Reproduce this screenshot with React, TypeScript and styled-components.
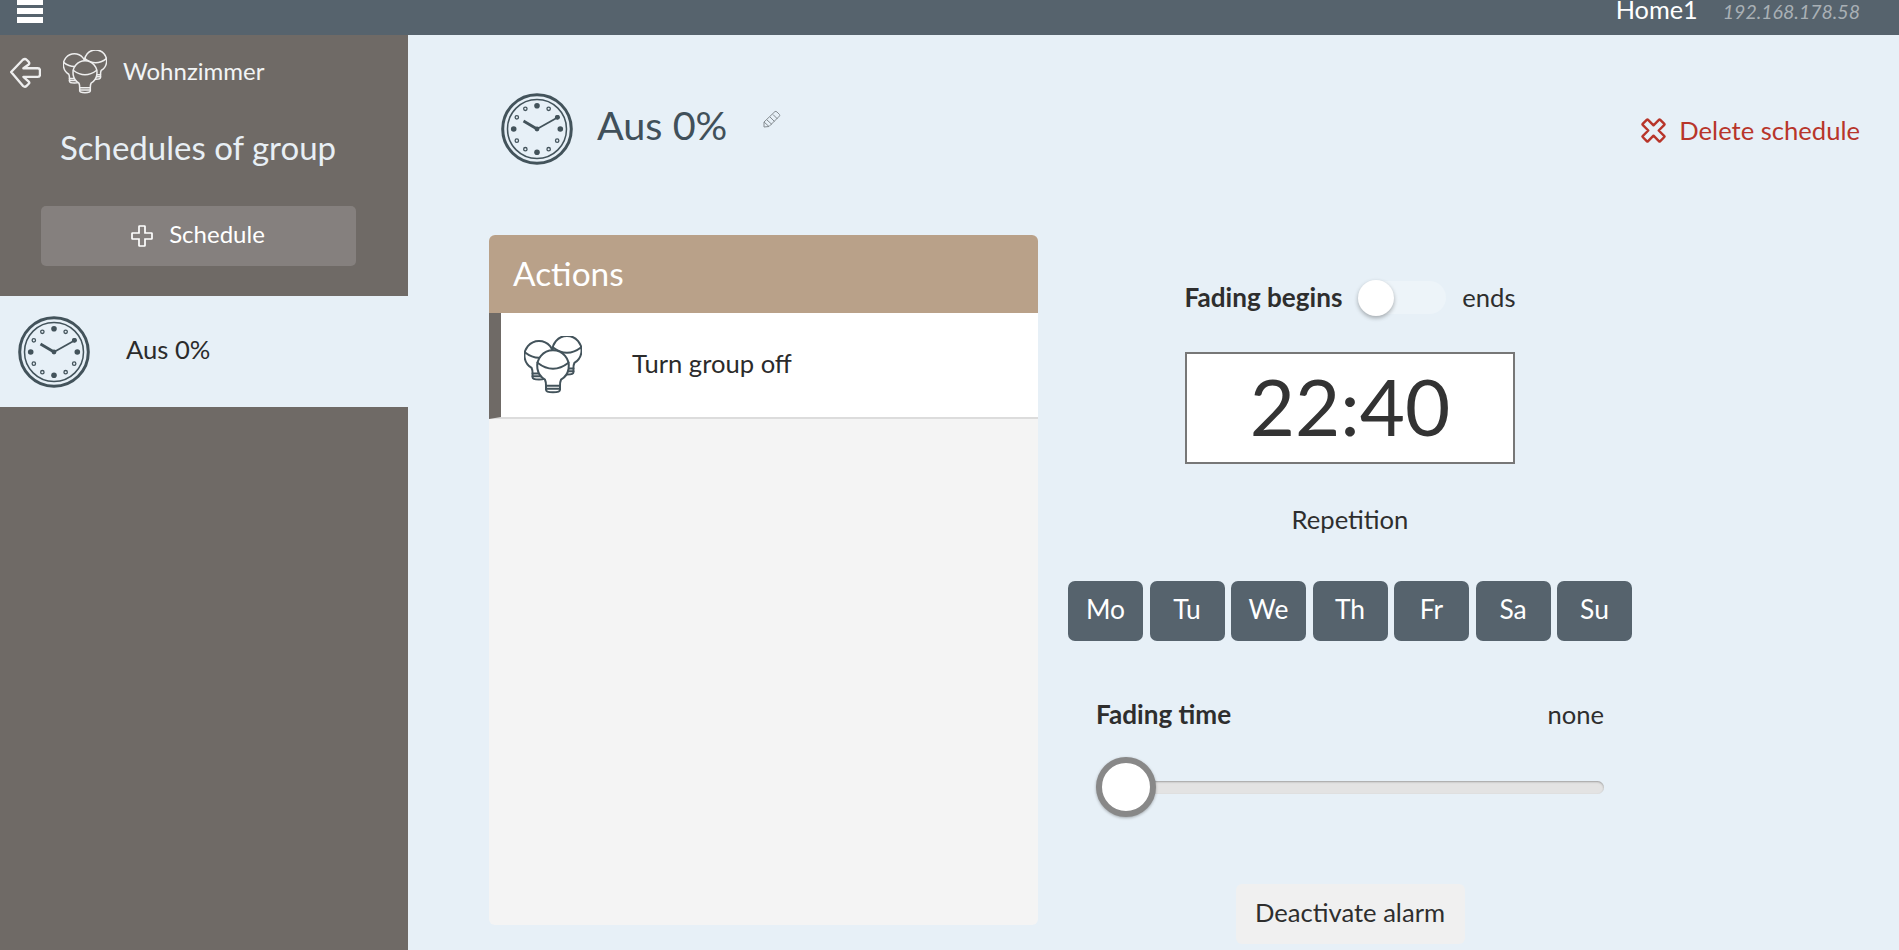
import React from "react";
import styled, { createGlobalStyle } from "styled-components";

const Global = createGlobalStyle`
  html, body { margin: 0; padding: 0; height: 100%; overflow: hidden; background: #e7f0f7; }
  body { font-family: Lato, "Liberation Sans", sans-serif; color: #333; font-size: 25.6px; font-variant-ligatures: common-ligatures; }
  * { box-sizing: border-box; }
`;

const Page = styled.div`display: flex; flex-direction: column; width: 1899px; height: 950px; overflow: hidden;`;
const TopBar = styled.header`
  flex: 0 0 35px; height: 35px; background: #56636d; display: flex; align-items: flex-start;
  justify-content: space-between; padding: 0 39px 0 17px; overflow: hidden;
`;
const Burger = styled.div`
  width: 26px; display: flex; flex-direction: column; gap: 3px; margin-top: -1px;
  & > i { display: block; height: 6px; background: #fff; }
`;
const HostInfo = styled.div`display: flex; align-items: baseline; gap: 25px; margin-top: -6px;`;
const HomeName = styled.span`color: #fff; font-size: 25.3px; line-height: 30px;`;
const HostIp = styled.span`color: #a9b0b5; font-size: 19.5px; font-style: italic;`;
const Body = styled.div`flex: 1; display: flex; min-height: 0;`;

const Sidebar = styled.aside`width: 408px; background: #6f6a66; display: flex; flex-direction: column;`;
const SideTop = styled.div`height: 261px; display: flex; flex-direction: column; align-items: center; padding-right: 12px;`;
const BackRow = styled.div`
  align-self: flex-start; display: flex; align-items: center; height: 45px; margin-top: 14px; padding-left: 9px;
`;
const GroupName = styled.span`color: #f2f4f5; font-size: 24px; margin: -2px 0 0 16px;`;
const SideTitle = styled.h2`color: #e8eff5; font-size: 33px; font-weight: 400; margin: 31px 0 0; line-height: 44px;`;
const AddButton = styled.button`
  width: 315px; height: 60px; margin-top: 37px; background: #85807e; border: 0; border-radius: 5px;
  color: #fff; font: 400 24px Lato, sans-serif; display: flex; align-items: center; justify-content: center; gap: 16px; padding: 0 0 5px;
  & > svg { margin-top: 5px; }
`;
const ScheduleItem = styled.div`height: 111px; background: #e7f0f7; display: flex; align-items: center; padding-left: 18px; gap: 36px; font-size: 25.6px; color: #2b2b2b;`;
const ItemLabel = styled.span`margin-top: -6px;`;

const Main = styled.main`flex: 1; padding: 0 39px 0 81px; display: flex; flex-direction: column;`;
const Head = styled.div`height: 200px; display: flex; align-items: flex-start; justify-content: space-between;`;
const TitleWrap = styled.div`display: flex; align-items: center; height: 72px; margin-top: 58px; margin-left: 12px;`;
const Title = styled.h1`font-size: 39.6px; font-weight: 400; color: #41505a; margin: -9px 0 0 24px;`;
const EditIcon = styled.svg`margin: 0 0 20px 36px;`;
const Delete = styled.a`display: flex; align-items: center; gap: 11px; color: #b8352a; font-size: 25.6px; margin-top: 78px; line-height: 34px;`;

const Content = styled.div`display: flex;`;
const Panel = styled.section`width: 549px; height: 690px; background: #f4f4f4; border-radius: 6px; overflow: hidden;`;
const PanelHead = styled.div`height: 78px; background: #b9a189; color: #fff; font-size: 33.4px; display: flex; align-items: center; padding: 0 0 2px 24px;`;
const ActionRow = styled.div`
  height: 106px; background: #fff; border-left: 12px solid #6f6a66; border-bottom: 2px solid #dcdcdc;
  display: flex; align-items: center; padding-left: 23px; gap: 50px; color: #2b2b2b; font-size: 25.6px;
`;
const ActionLabel = styled.span`margin-top: -4px;`;

const Settings = styled.div`width: 564px; margin-left: 30px; display: flex; flex-direction: column; align-items: center;`;
const ModeRow = styled.div`display: flex; align-items: center; height: 36px; margin-top: 44px; width: 331px; justify-content: space-between;`;
const Bold = styled.span`font-weight: 700; color: #2e2e2e; font-size: 26.1px;`;
const Plain = styled.span`color: #2e2e2e; font-size: 25.6px;`;
const Switch = styled.div`
  position: relative; width: 88px; height: 33px; border-radius: 17px; background: #edf4f9; margin-right: 1px;
  &::after {
    content: ""; position: absolute; left: 0; top: -1px; width: 36px; height: 36px; border-radius: 50%;
    background: #fff; box-shadow: 0 2px 4px rgba(0,0,0,.3);
  }
`;
const TimeBox = styled.div`
  width: 330px; height: 112px; margin-top: 37px; border: 2px solid #777; background: #fff; font-size: 78px;
  color: #333; display: flex; align-items: center; justify-content: center; padding-bottom: 4px;
`;
const Repetition = styled.div`font-size: 25.6px; color: #2e2e2e; margin-top: 38px; line-height: 34px;`;
const Days = styled.div`display: flex; gap: 6.5px; margin-top: 45px;`;
const Day = styled.button`
  width: 75px; height: 60px; background: #56636d; color: #fff; border: 0; border-radius: 7px;
  font: 400 26.4px Lato, sans-serif; padding: 0 0 4px;
`;
const FadeBlock = styled.div`width: 508px; margin-top: 55px;`;
const FadeHead = styled.div`display: flex; justify-content: space-between; align-items: baseline; line-height: 36px;`;
const Slider = styled.div`position: relative; height: 60px; margin-top: 25px; display: flex; align-items: center;`;
const Track = styled.div`
  width: 100%; height: 13px; border-radius: 7px; background: #e3e3e3; box-shadow: inset 0 1px 2px rgba(0,0,0,.3);
`;
const Thumb = styled.div`
  position: absolute; left: 0; top: 0; width: 60px; height: 60px; border-radius: 50%; background: #fff;
  border: 6px solid #888; box-shadow: 0 1px 3px rgba(0,0,0,.3);
`;
const Deactivate = styled.button`
  width: 229px; height: 60px; margin-top: 67px; background: #f0f0f0; border: 0; border-radius: 6px; color: #2e2e2e;
  font: 400 25.6px Lato, sans-serif; padding: 0 0 4px;
`;

const Bulb = ({ x, y, s, bg, color }: { x: number; y: number; s: number; bg: string; color: string }) => (
  <g transform={`translate(${x} ${y}) scale(${s})`} fill={bg} stroke={color} strokeWidth={2 / s} strokeLinecap="round" strokeLinejoin="round">
    <path d="M-8 13A15.8 15.8 0 1 1 8 13C7 15 7 17 7 19V23C7 25 3 25.5 0 25.5C-3 25.5 -7 25 -7 23V19C-7 17 -7 15 -8 13Z" />
    <path d="M-15.5 -4Q0 8 15.5 -4M-7 19H7M-7 22H7" fill="none" />
  </g>
);

const Bulbs = ({ size, bg, color }: { size: number; bg: string; color: string }) => (
  <svg width={size} height={size} viewBox="0 0 58 58">
    <Bulb x={43} y={15} s={0.92} bg={bg} color={color} />
    <Bulb x={15} y={20} s={0.92} bg={bg} color={color} />
    <Bulb x={29} y={30.7} s={1} bg={bg} color={color} />
  </svg>
);

const Clock = () => {
  const c = "#43535b";
  const dots = Array.from({ length: 12 }, (_, i) => {
    const a = (i * Math.PI) / 6;
    const big = i % 3 === 0;
    return (
      <circle key={i} cx={36 + 23.3 * Math.sin(a)} cy={36 - 23.3 * Math.cos(a)} r={big ? 2.8 : 1.7}
        fill={big ? c : "none"} stroke={c} strokeWidth={big ? 0 : 1.3} />
    );
  });
  return (
    <svg width="72" height="72" viewBox="0 0 72 72" fill="none">
      <circle cx="36" cy="36" r="34.3" stroke={c} strokeWidth="3" />
      <circle cx="36" cy="36" r="29.5" stroke={c} strokeWidth="1.5" />
      {dots}
      <path d="M36 36L56.5 24.5" stroke={c} strokeWidth="1.8" />
      <path d="M36 36L22.5 28" stroke={c} strokeWidth="2.8" />
      <circle cx="36" cy="36" r="2.4" fill={c} />
      <circle cx="56.7" cy="24.3" r="2.2" fill={c} />
    </svg>
  );
};

const PLUS = "M8 1.5Q8 1 8.5 1H13.5Q14 1 14 1.5V8H20.5Q21 8 21 8.5V13.5Q21 14 20.5 14H14V20.5Q14 21 13.5 21H8.5Q8 21 8 20.5V14H1.5Q1 14 1 13.5V8.5Q1 8 1.5 8H8Z";

const PlusIcon = () => (
  <svg width="22" height="22" viewBox="0 0 22 22" fill="none">
    <path d={PLUS} stroke="#fff" strokeWidth="1.7" />
  </svg>
);

const CrossIcon = () => (
  <svg width="29" height="29" viewBox="-3.5 -3.5 29 29" fill="none">
    <path d={PLUS} transform="rotate(45 11 11) translate(-2.5 -2.5) scale(1.227)" stroke="#b8352a" strokeWidth="2" strokeLinejoin="round" />
  </svg>
);

const BackIcon = () => (
  <svg width="32" height="32" viewBox="0 0 30 30" fill="none">
    <path d="M2 15L13 3.5Q15 2 16.5 3.5L18.5 5.5Q19.5 7 18.5 8L13.5 11.5H27Q29 11.5 29 13.5V17.5Q29 19.5 27 19.5H13.5L18.5 24Q19.5 25 18.5 26L16.5 28Q15 29.5 13 28Z"
      stroke="#eeeeee" strokeWidth="2.2" strokeLinejoin="round" />
  </svg>
);

const BackGap = styled.span`width: 22px;`;

const days = ["Mo", "Tu", "We", "Th", "Fr", "Sa", "Su"];

export default function App() {
  return (
    <Page>
      <Global />
      <TopBar>
        <Burger><i /><i /><i /></Burger>
        <HostInfo>
          <HomeName>Home1</HomeName>
          <HostIp>192.168.178.58</HostIp>
        </HostInfo>
      </TopBar>
      <Body>
        <Sidebar>
          <SideTop>
            <BackRow>
              <BackIcon />
              <BackGap />
              <Bulbs size={44} bg="#6f6a66" color="#eeeeee" />
              <GroupName>Wohnzimmer</GroupName>
            </BackRow>
            <SideTitle>Schedules of group</SideTitle>
            <AddButton><PlusIcon />Schedule</AddButton>
          </SideTop>
          <ScheduleItem><Clock /><ItemLabel>Aus 0%</ItemLabel></ScheduleItem>
        </Sidebar>
        <Main>
          <Head>
            <TitleWrap>
              <Clock />
              <Title>Aus 0%</Title>
              <EditIcon width="18" height="18" viewBox="0 0 18 18" fill="none" stroke="#858c91" strokeWidth="1">
                <path d="M1 12L12 1.5Q13 1 14 2L16.5 4.5Q17 5.5 16.5 6L6 16.5L1 17Z" />
                <path d="M1 12L6 16.5M4 10L9 14.5M7 7L11.5 11.5M10 4.5L14.5 9" />
              </EditIcon>
            </TitleWrap>
            <Delete><CrossIcon />Delete schedule</Delete>
          </Head>
          <Content>
            <Panel>
              <PanelHead>Actions</PanelHead>
              <ActionRow>
                <Bulbs size={58} bg="#fff" color="#43535b" />
                <ActionLabel>Turn group off</ActionLabel>
              </ActionRow>
            </Panel>
            <Settings>
              <ModeRow><Bold>Fading begins</Bold><Switch /><Plain>ends</Plain></ModeRow>
              <TimeBox>22:40</TimeBox>
              <Repetition>Repetition</Repetition>
              <Days>{days.map((d) => <Day key={d}>{d}</Day>)}</Days>
              <FadeBlock>
                <FadeHead><Bold>Fading time</Bold><Plain>none</Plain></FadeHead>
                <Slider><Track /><Thumb /></Slider>
              </FadeBlock>
              <Deactivate>Deactivate alarm</Deactivate>
            </Settings>
          </Content>
        </Main>
      </Body>
    </Page>
  );
}
